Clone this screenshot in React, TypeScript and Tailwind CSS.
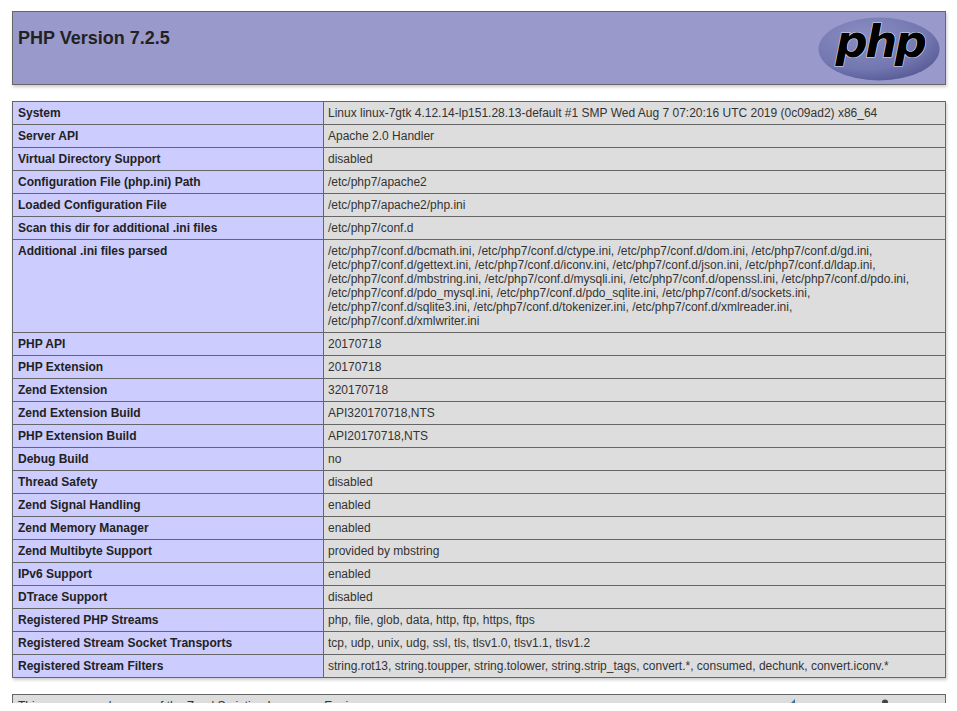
import React from 'react';

const rows: [string, React.ReactNode][] = [
  ['System', 'Linux linux-7gtk 4.12.14-lp151.28.13-default #1 SMP Wed Aug 7 07:20:16 UTC 2019 (0c09ad2) x86_64'],
  ['Server API', 'Apache 2.0 Handler'],
  ['Virtual Directory Support', 'disabled'],
  ['Configuration File (php.ini) Path', '/etc/php7/apache2'],
  ['Loaded Configuration File', '/etc/php7/apache2/php.ini'],
  ['Scan this dir for additional .ini files', '/etc/php7/conf.d'],
  [
    'Additional .ini files parsed',
    <>
      /etc/php7/conf.d/bcmath.ini, /etc/php7/conf.d/ctype.ini, /etc/php7/conf.d/dom.ini, /etc/php7/conf.d/gd.ini,
      <br />
      /etc/php7/conf.d/gettext.ini, /etc/php7/conf.d/iconv.ini, /etc/php7/conf.d/json.ini, /etc/php7/conf.d/ldap.ini,
      <br />
      /etc/php7/conf.d/mbstring.ini, /etc/php7/conf.d/mysqli.ini, /etc/php7/conf.d/openssl.ini, /etc/php7/conf.d/pdo.ini,
      <br />
      /etc/php7/conf.d/pdo_mysql.ini, /etc/php7/conf.d/pdo_sqlite.ini, /etc/php7/conf.d/sockets.ini,
      <br />
      /etc/php7/conf.d/sqlite3.ini, /etc/php7/conf.d/tokenizer.ini, /etc/php7/conf.d/xmlreader.ini,
      <br />
      /etc/php7/conf.d/xmlwriter.ini
    </>,
  ],
  ['PHP API', '20170718'],
  ['PHP Extension', '20170718'],
  ['Zend Extension', '320170718'],
  ['Zend Extension Build', 'API320170718,NTS'],
  ['PHP Extension Build', 'API20170718,NTS'],
  ['Debug Build', 'no'],
  ['Thread Safety', 'disabled'],
  ['Zend Signal Handling', 'enabled'],
  ['Zend Memory Manager', 'enabled'],
  ['Zend Multibyte Support', 'provided by mbstring'],
  ['IPv6 Support', 'enabled'],
  ['DTrace Support', 'disabled'],
  ['Registered PHP Streams', 'php, file, glob, data, http, ftp, https, ftps'],
  ['Registered Stream Socket Transports', 'tcp, udp, unix, udg, ssl, tls, tlsv1.0, tlsv1.1, tlsv1.2'],
  ['Registered Stream Filters', 'string.rot13, string.toupper, string.tolower, string.strip_tags, convert.*, consumed, dechunk, convert.iconv.*'],
];

function PhpLogo() {
  return (
    <svg width="124" height="66" viewBox="0 0 124 66" className="block">
      <defs>
        <radialGradient id="logoFill" cx="38%" cy="30%" r="80%">
          <stop offset="0%" stopColor="#8a8ec2" />
          <stop offset="65%" stopColor="#7377b0" />
          <stop offset="100%" stopColor="#4f5390" />
        </radialGradient>
      </defs>
      <ellipse cx="62" cy="33" rx="60.5" ry="31.5" fill="url(#logoFill)" />
      <text
        x="63"
        y="41"
        textAnchor="middle"
        fontFamily="'DejaVu Sans', sans-serif"
        fontStyle="italic"
        fontWeight="700"
        fontSize="45"
        letterSpacing="-2.5"
        fill="#000"
        stroke="#dfe0f0"
        strokeWidth="1.2"
        paintOrder="stroke"
      >
        php
      </text>
    </svg>
  );
}

export default function App() {
  return (
    <div className="relative h-[711px] overflow-hidden bg-white font-['Liberation_Sans',Arial,sans-serif] text-[12px] leading-[14px] text-[#222]">
      <div className="pt-[11px] pl-[12px]">
        {/* Header */}
        <div className="flex h-[74px] w-[934px] items-start justify-between border border-[#666] bg-[#99c] pt-[4px] pr-[4px] pl-[5px] shadow-[1px_2px_3px_#ccc]">
          <h1 className="mt-[9px] text-[18px] leading-[26px] font-bold">PHP Version 7.2.5</h1>
          <PhpLogo />
        </div>

        {/* Config table */}
        <table className="mt-[16px] w-[934px] table-fixed border-collapse shadow-[1px_2px_3px_#ccc]">
          <colgroup>
            <col className="w-[311px]" />
            <col />
          </colgroup>
          <tbody>
            {rows.map(([label, value]) => (
              <tr key={label}>
                <td className="border border-[#666] bg-[#ccf] px-[5px] py-[4px] align-baseline font-bold">{label}</td>
                <td className="border border-[#666] bg-[#ddd] py-[4px] pr-[5px] pl-[4px] align-baseline text-[#333]">{value}</td>
              </tr>
            ))}
          </tbody>
        </table>

        {/* Zend box, cut off by the bottom of the picture */}
        <div className="relative mt-[16px] h-[60px] w-[934px] border border-[#666] bg-[#ddd] px-[5px] py-[4px] text-[#333]">
          This program makes use of the Zend Scripting Language Engine:
          <svg width="110" height="12" viewBox="0 0 110 12" className="absolute top-0 left-[774px]">
            <path d="M3 9 L8 4 L8 9 Z" fill="#3f6f9f" />
            <ellipse cx="98" cy="7" rx="3" ry="2.5" fill="#444" />
          </svg>
        </div>
      </div>

      {/* White strip over the end of the capture */}
      <div className="absolute inset-x-0 top-[703px] bottom-0 bg-white" />
    </div>
  );
}
